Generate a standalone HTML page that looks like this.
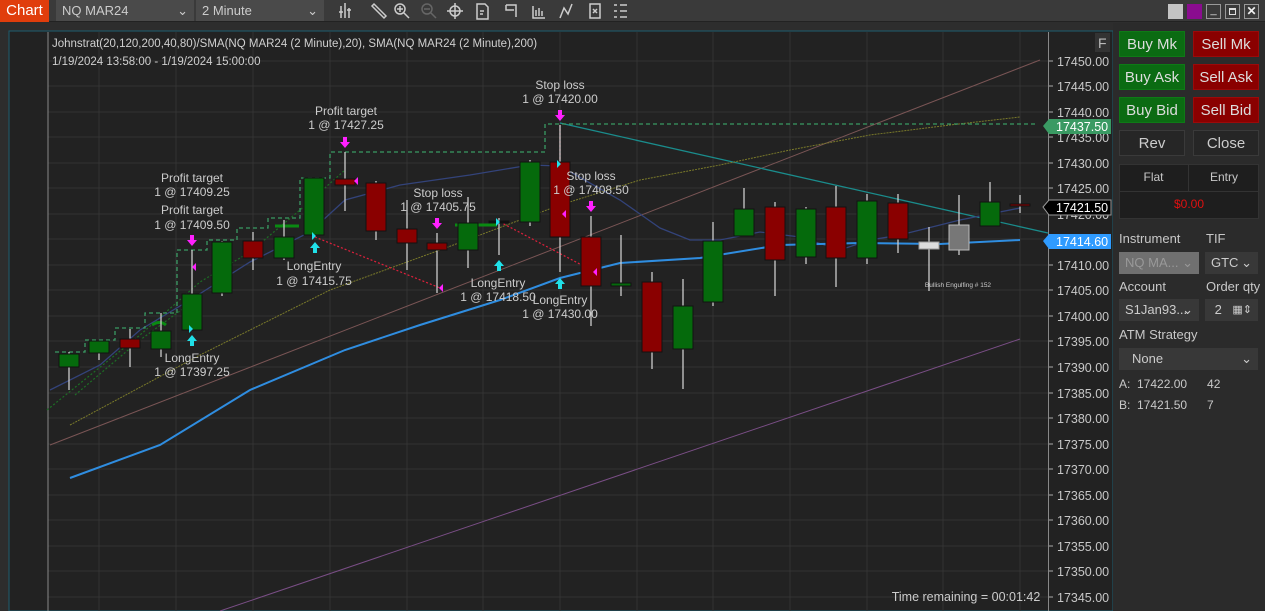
<!DOCTYPE html>
<html><head><meta charset="utf-8"><style>
*{margin:0;padding:0;box-sizing:border-box}
body{width:1265px;height:611px;background:#2d2d2d;overflow:hidden;font-family:"Liberation Sans",sans-serif;position:relative}
.a{position:absolute}
.btn{position:absolute;width:66px;height:26px;color:#ddd;font-size:15px;text-align:center;line-height:26px}
.g{background:#0b6b12;border:1px solid #0e7a16}
.r{background:#8a0000;border:1px solid #9a0a0a}
.d{background:#262626;border:1px solid #3a3a3a;color:#ccc}
.lbl{position:absolute;color:#c8c8c8;font-size:13px}
.sel{position:absolute;background:#383838;color:#ccc;font-size:13px;height:22px;line-height:22px;padding-left:6px}
.sel span{position:absolute;right:6px;top:0}
</style></head><body>
<!-- toolbar -->
<div class="a" style="left:0;top:0;width:1265px;height:22px;background:#3a3a3a;border-bottom:1px solid #222"></div>
<div class="a" style="left:0;top:0;width:49px;height:22px;background:#e03d0c;color:#fff;font-size:15px;line-height:22px;text-align:center">Chart</div>
<div class="sel" style="left:56px;top:0;width:102px;height:21px;line-height:21px;background:#4a4a4a;left:56px;width:138px">NQ MAR24<span>&#8964;</span></div>
<div class="sel" style="left:196px;top:0;width:128px;height:21px;line-height:21px;background:#4a4a4a">2 Minute<span>&#8964;</span></div>
<svg class="a" style="left:330px;top:0" width="310" height="22" fill="none" stroke="#ccc" stroke-width="1.5">
<path d="M11 6v12M15 3v15M19 8v10M9 12h4M17 10h4"/>
<path d="M44 4l12 12-2 2-12-12z"/>
<circle cx="70" cy="9" r="5"/><path d="M74 13l5 5M67 9h6M70 6v6"/>
<g stroke="#666"><circle cx="97" cy="9" r="5"/><path d="M101 13l5 5M94 9h6"/></g>
<circle cx="125" cy="11" r="5"/><path d="M125 3v16M117 11h16"/>
<path d="M147 4h8l3 3v12h-11z M150 11h4M150 14h3"/>
<path d="M176 5h10v12M176 5v5h8"/>
<path d="M203 6v12h12M206 10v6M209 8v8M212 11v5"/>
<path d="M230 18l4-10 4 6 4-10"/>
<rect x="260" y="4" width="10" height="14"/><path d="M263 9l4 4M267 9l-4 4"/>
<path d="M284 5h3M290 5h7M284 11h3M290 11h7M284 17h3M290 17h7"/>
</svg>
<div class="a" style="left:1168px;top:4px;width:15px;height:15px;background:#c4c4c4"></div>
<div class="a" style="left:1187px;top:4px;width:15px;height:15px;background:#8a0c8f"></div>
<div class="a" style="left:1206px;top:4px;width:15px;height:15px;border:1px solid #999;color:#ddd;font-size:11px;text-align:center;line-height:10px">_</div>
<div class="a" style="left:1225px;top:4px;width:15px;height:15px;border:1px solid #999"><div style="margin:3px;width:7px;height:7px;border:1px solid #ddd;border-top-width:2px"></div></div>
<div class="a" style="left:1244px;top:4px;width:15px;height:15px;border:1px solid #999;color:#eee;font-size:12px;font-weight:bold;text-align:center;line-height:13px">✕</div>

<!-- chart -->
<svg class="a" style="left:0;top:0" width="1115" height="611" font-family="Liberation Sans,sans-serif">
<rect x="9" y="31" width="1104" height="580" fill="#222" stroke="#1d5d70" stroke-width="1"/>
<g stroke="#333" stroke-width="1">
<path d="M48 61H1048M48 86H1048M48 112H1048M48 137H1048M48 163H1048M48 188H1048M48 214H1048M48 239H1048M48 265H1048M48 290H1048M48 316H1048M48 341H1048M48 367H1048M48 393H1048M48 418H1048M48 444H1048M48 469H1048M48 495H1048M48 520H1048M48 546H1048M48 571H1048M48 597H1048"/>
<path d="M99 32V611M176 32V611M253 32V611M330 32V611M407 32V611M483 32V611M560 32V611M637 32V611M713 32V611M790 32V611M867 32V611M943 32V611M1020 32V611"/>
</g>
<line x1="48" y1="32" x2="48" y2="611" stroke="#888"/>
<line x1="1048.5" y1="32" x2="1048.5" y2="611" stroke="#888"/>
<rect x="1095" y="33" width="15" height="19" fill="#333"/><text x="1098" y="48" fill="#bbb" font-size="14">F</text>
<g fill="#c8c8c8" font-size="12.5">
<text x="1057" y="66">17450.00</text><text x="1057" y="91">17445.00</text><text x="1057" y="117">17440.00</text><text x="1057" y="142">17435.00</text><text x="1057" y="168">17430.00</text><text x="1057" y="193">17425.00</text><text x="1057" y="219">17420.00</text><text x="1057" y="270">17410.00</text><text x="1057" y="295">17405.00</text><text x="1057" y="321">17400.00</text><text x="1057" y="346">17395.00</text><text x="1057" y="372">17390.00</text><text x="1057" y="398">17385.00</text><text x="1057" y="423">17380.00</text><text x="1057" y="449">17375.00</text><text x="1057" y="474">17370.00</text><text x="1057" y="500">17365.00</text><text x="1057" y="525">17360.00</text><text x="1057" y="551">17355.00</text><text x="1057" y="576">17350.00</text><text x="1057" y="602">17345.00</text>
</g>
<g stroke="#aaa"><path d="M1049 61h4M1049 86h4M1049 112h4M1049 137h4M1049 163h4M1049 188h4M1049 214h4M1049 265h4M1049 290h4M1049 316h4M1049 341h4M1049 367h4M1049 393h4M1049 418h4M1049 444h4M1049 469h4M1049 495h4M1049 520h4M1049 546h4M1049 571h4M1049 597h4"/></g>
<!-- tags -->
<path d="M1043 126l6-7h62v15h-62z" fill="#3a9a63"/><text x="1056" y="131" fill="#fff" font-size="12.5">17437.50</text>
<path d="M1043 207l6-7h62v15h-62z" fill="#000" stroke="#999"/><text x="1056" y="212" fill="#fff" font-size="12.5">17421.50</text>
<path d="M1043 241l6-7h62v15h-62z" fill="#2f9bff"/><text x="1056" y="246" fill="#fff" font-size="12.5">17414.60</text>
<g fill="#d0d0d0" font-size="11.5">
<text x="52" y="47">Johnstrat(20,120,200,40,80)/SMA(NQ MAR24 (2 Minute),20), SMA(NQ MAR24 (2 Minute),200)</text>
<text x="52" y="65">1/19/2024 13:58:00 - 1/19/2024 15:00:00</text>
</g>
<!-- indicator lines -->
<g fill="none">
<path d="M50 445L1040 60" stroke="#7a5555" stroke-width="1"/>
<path d="M220 611L1020 339" stroke="#7a4e86" stroke-width="1"/>
<path d="M560 123L1048 233" stroke="#1a8c8c" stroke-width="1.3"/>
<path d="M70 425L200 355L330 290L440 250L560 205L640 180L720 165L790 150L870 135L950 125L1020 117" stroke="#7a7a2a" stroke-width="1" stroke-dasharray="2 1"/>
<path d="M47 410L140 335L200 282L250 252L300 210L345 170M75 395L140 340L195 300" stroke="#1d6e25" stroke-width="1.2" stroke-dasharray="2 2"/>
<path d="M50 390L100 365L140 330L190 300L250 262L310 232L345 200L400 185L470 175L530 165L560 166L620 200L660 228L690 240L720 240L760 232L800 237L840 250L870 240L900 235L960 220L1020 208" stroke="#33437a" stroke-width="1.3"/>
<path d="M70 478L160 445L250 390L345 350L420 325L500 300L560 278L620 263L700 258L780 245L860 243L940 244L1020 240" stroke="#2f8de0" stroke-width="2"/>
<path d="M55 352H85V340H115V328H145V313H177V250H207V240H237V228H268V218H300V178H330V152H545V124H1035" stroke="#3a9a63" stroke-width="1.3" stroke-dasharray="4 3"/>
<path d="M315 237L440 288M500 222L595 272" stroke="#e0203c" stroke-width="1.2" stroke-dasharray="2 2"/>
<path d="M560 125V240" stroke="#e0203c" stroke-width="1.2" stroke-dasharray="2 2"/>
<path d="M152 325q8-5 14 0M275 226h24M348 157h0M455 225h42" stroke="#0a8a12" stroke-width="3"/>
</g>
<!-- candles -->
<g stroke="#ccc" stroke-width="1.3">
<path d="M69 352V390M99 341V360M130 329V367M161 313V357M192 250V330M222 241V296M253 232V270M284 220V260M314 178V235M345 152V211M376 181V240M407 200V270M437 233V293M468 197V268M499 218V255M530 160V226M560 125V272M591 216V326M621 235V296M652 272V369M683 279V389M713 222V306M744 188V236M775 202V296M806 207V264M836 186V287M867 194V264M898 194V253M929 227V291M959 195V255M990 182V226M1020 195V213"/>
</g>
<g stroke="#111" stroke-width="1">
<g fill="#056a0c">
<rect x="59" y="354" width="20" height="13"/><rect x="89" y="341" width="20" height="12"/><rect x="151" y="331" width="20" height="18"/><rect x="182" y="294" width="20" height="36"/><rect x="212" y="242" width="20" height="51"/><rect x="274" y="237" width="20" height="21"/><rect x="304" y="178" width="20" height="57"/><rect x="458" y="223" width="20" height="27"/><rect x="520" y="162" width="20" height="60"/><rect x="611" y="283" width="20" height="3"/><rect x="673" y="306" width="20" height="43"/><rect x="703" y="241" width="20" height="61"/><rect x="734" y="209" width="20" height="27"/><rect x="796" y="209" width="20" height="48"/><rect x="857" y="201" width="20" height="57"/><rect x="980" y="202" width="20" height="24"/>
</g>
<g fill="#8a0000">
<rect x="120" y="339" width="20" height="9"/><rect x="243" y="241" width="20" height="17"/><rect x="335" y="179" width="20" height="6"/><rect x="366" y="183" width="20" height="48"/><rect x="397" y="229" width="20" height="14"/><rect x="427" y="243" width="20" height="7"/><rect x="550" y="162" width="20" height="75"/><rect x="581" y="237" width="20" height="49"/><rect x="642" y="282" width="20" height="70"/><rect x="765" y="207" width="20" height="53"/><rect x="826" y="207" width="20" height="51"/><rect x="888" y="203" width="20" height="36"/><rect x="1010" y="204" width="20" height="2"/>
</g>
<rect x="919" y="242" width="20" height="7" fill="#ddd" stroke="#999"/>
<rect x="949" y="225" width="20" height="25" fill="#777" stroke="#bbb"/>
<rect x="489" y="221" width="20" height="2" fill="#111"/>
</g>
<!-- markers -->
<g fill="#ff20ff">
<path d="M190 235h4v5h3l-5 6-5-6h3z"/><path d="M343 137h4v5h3l-5 6-5-6h3z"/><path d="M435 218h4v5h3l-5 6-5-6h3z"/><path d="M558 110h4v5h3l-5 6-5-6h3z"/><path d="M589 201h4v5h3l-5 6-5-6h3z"/>
<path d="M196 263l-4 4 4 4z"/><path d="M358 177l-4 4 4 4z"/><path d="M443 284l-4 4 4 4z"/><path d="M566 210l-4 4 4 4z"/><path d="M597 268l-4 4 4 4z"/>
</g>
<g fill="#20e0e8">
<path d="M190 346h4v-5h3l-5-6-5 6h3z"/><path d="M313 253h4v-5h3l-5-6-5 6h3z"/><path d="M497 271h4v-5h3l-5-6-5 6h3z"/><path d="M558 289h4v-5h3l-5-6-5 6h3z"/>
<path d="M189 325l4 4-4 4z"/><path d="M312 232l4 4-4 4z"/><path d="M496 218l4 4-4 4z"/><path d="M557 160l4 4-4 4z"/>
</g>
<g fill="#ccc" font-size="12" text-anchor="middle">
<text x="192" y="182">Profit target</text><text x="192" y="196">1 @ 17409.25</text>
<text x="192" y="214">Profit target</text><text x="192" y="229">1 @ 17409.50</text>
<text x="346" y="115">Profit target</text><text x="346" y="129">1 @ 17427.25</text>
<text x="438" y="197">Stop loss</text><text x="438" y="211">1 @ 17405.75</text>
<text x="560" y="89">Stop loss</text><text x="560" y="103">1 @ 17420.00</text>
<text x="591" y="180">Stop loss</text><text x="591" y="194">1 @ 17408.50</text>
<text x="192" y="362">LongEntry</text><text x="192" y="376">1 @ 17397.25</text>
<text x="314" y="270">LongEntry</text><text x="314" y="285">1 @ 17415.75</text>
<text x="498" y="287">LongEntry</text><text x="498" y="301">1 @ 17418.50</text>
<text x="560" y="304">LongEntry</text><text x="560" y="318">1 @ 17430.00</text>
<text x="958" y="287" font-size="6.5">Bullish Engulfing # 152</text>
<text x="966" y="601" font-size="12.5">Time remaining = 00:01:42</text>
</g>
</svg>

<!-- right panel -->
<div class="a" style="left:1113px;top:23px;width:152px;height:588px;background:#2b2b2b"></div>
<div class="btn g" style="left:1119px;top:31px">Buy Mk</div>
<div class="btn r" style="left:1193px;top:31px">Sell Mk</div>
<div class="btn g" style="left:1119px;top:64px">Buy Ask</div>
<div class="btn r" style="left:1193px;top:64px">Sell Ask</div>
<div class="btn g" style="left:1119px;top:97px">Buy Bid</div>
<div class="btn r" style="left:1193px;top:97px">Sell Bid</div>
<div class="btn d" style="left:1119px;top:130px">Rev</div>
<div class="btn d" style="left:1193px;top:130px">Close</div>
<div class="a" style="left:1119px;top:164px;width:140px;height:55px;background:#1e1e1e;border:1px solid #333"></div>
<div class="a" style="left:1188px;top:164px;width:1px;height:27px;background:#333"></div>
<div class="a" style="left:1119px;top:191px;width:140px;height:1px;background:#333"></div>
<div class="lbl" style="left:1119px;top:170px;width:69px;text-align:center;font-size:12px">Flat</div>
<div class="lbl" style="left:1189px;top:170px;width:70px;text-align:center;font-size:12px">Entry</div>
<div class="lbl" style="left:1119px;top:197px;width:140px;text-align:center;font-size:12px;color:#e01010">$0.00</div>
<div class="lbl" style="left:1119px;top:231px">Instrument</div>
<div class="lbl" style="left:1206px;top:231px">TIF</div>
<div class="sel" style="left:1119px;top:252px;width:80px;background:#707070;color:#999">NQ MA...<span>&#8964;</span></div>
<div class="sel" style="left:1205px;top:252px;width:53px">GTC<span>&#8964;</span></div>
<div class="lbl" style="left:1119px;top:279px">Account</div>
<div class="lbl" style="left:1206px;top:279px">Order qty</div>
<div class="sel" style="left:1119px;top:299px;width:80px">S1Jan93...<span>&#8964;</span></div>
<div class="sel" style="left:1205px;top:299px;width:53px">&nbsp;2 <span style="font-size:11px">▦⇕</span></div>
<div class="lbl" style="left:1119px;top:327px">ATM Strategy</div>
<div class="sel" style="left:1119px;top:348px;width:139px;padding-left:13px">None<span>&#8964;</span></div>
<div class="lbl" style="left:1119px;top:377px;font-size:12px">A:&nbsp; 17422.00&nbsp;&nbsp;&nbsp;&nbsp;&nbsp; 42</div>
<div class="lbl" style="left:1119px;top:398px;font-size:12px">B:&nbsp; 17421.50&nbsp;&nbsp;&nbsp;&nbsp;&nbsp; 7</div>
</body></html>
